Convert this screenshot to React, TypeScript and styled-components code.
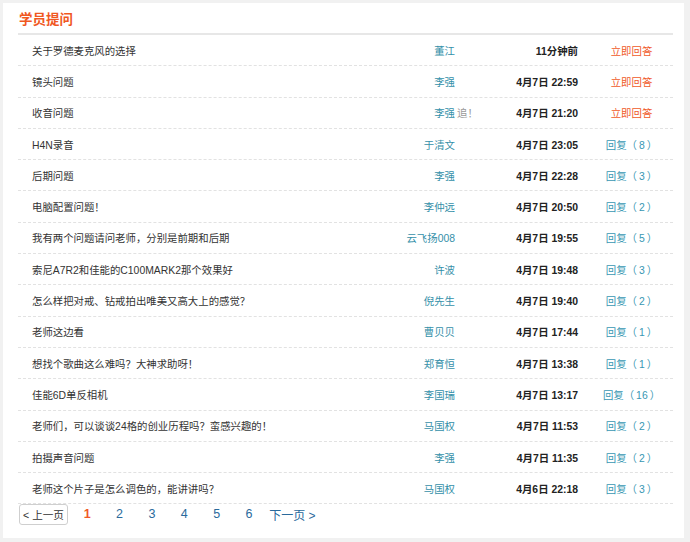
import styled, { createGlobalStyle } from 'styled-components'

const GlobalStyle = createGlobalStyle`
  html, body {
    margin: 0;
    padding: 0;
    background: #f1f1f1;
  }
  body {
    font-family: "Liberation Sans", "Noto Sans CJK SC", sans-serif;
  }
`

const Panel = styled.div`
  margin: 3px 6px 0 3px;
  height: 535px;
  background: #fff;
  padding: 0 11px 0 15px;
  box-sizing: border-box;
`

const Header = styled.div`
  height: 30px;
  display: flex;
  align-items: center;
  border-bottom: 2px solid #e7e7e7;
`

const Title = styled.h2`
  margin: 0;
  font-size: 13.5px;
  font-weight: bold;
  color: #f0581f;
  padding-left: 1px;
`

const List = styled.ul`
  list-style: none;
  margin: 0;
  padding: 0;
`

const Row = styled.li`
  display: grid;
  grid-template-columns: 1fr 80px 123px 95px;
  align-items: center;
  height: 30.3px;
  border-bottom: 1px dashed #e2e2e2;
  font-size: 10.4px;
`

const Question = styled.span`
  padding-left: 14px;
  color: #333;
  white-space: nowrap;
  overflow: hidden;
`

const Name = styled.span`
  display: flex;
  justify-content: flex-end;
  color: #3590a9;
  white-space: nowrap;
`

const Chase = styled.span`
  color: #999;
  margin-left: 2px;
  margin-right: calc(-2em - 2px);
`

const Time = styled.span`
  text-align: right;
  color: #222;
  font-weight: bold;
  white-space: nowrap;
`

const Action = styled.span<{ $urgent?: boolean }>`
  padding-left: 12px;
  text-align: center;
  color: ${(p) => (p.$urgent ? '#f05a28' : '#3897b3')};
  white-space: nowrap;
`

const Count = styled.span`
  padding: 0 2px;
`

const Pager = styled.div`
  display: flex;
  align-items: center;
  margin-top: -1px;
  height: 22px;
  padding-left: 1px;
`

const PrevButton = styled.button`
  height: 21px;
  padding: 0 3px;
  border: 1px solid #cfcfcf;
  border-radius: 3px;
  background: #fff;
  font-family: "Liberation Sans", "Noto Sans CJK SC", sans-serif;
  font-size: 10.6px;
  color: #333;
  margin-right: 3px;
`

const PageNum = styled.a<{ $active?: boolean }>`
  width: 32.4px;
  text-align: center;
  font-size: 12.5px;
  color: ${(p) => (p.$active ? '#f05a28' : '#2a6a9c')};
  font-weight: ${(p) => (p.$active ? 'bold' : 'normal')};
`

const NextLink = styled.a`
  margin-left: 4px;
  font-size: 12px;
  color: #2a6a9c;
`

type Item = {
  q: string
  name: string
  chase?: boolean
  time: string
  replies?: number
}

const items: Item[] = [
  { q: '关于罗德麦克风的选择', name: '董江', time: '11分钟前' },
  { q: '镜头问题', name: '李强', time: '4月7日 22:59' },
  { q: '收音问题', name: '李强', chase: true, time: '4月7日 21:20' },
  { q: 'H4N录音', name: '于清文', time: '4月7日 23:05', replies: 8 },
  { q: '后期问题', name: '李强', time: '4月7日 22:28', replies: 3 },
  { q: '电脑配置问题！', name: '李仲远', time: '4月7日 20:50', replies: 2 },
  { q: '我有两个问题请问老师，分别是前期和后期', name: '云飞扬008', time: '4月7日 19:55', replies: 5 },
  { q: '索尼A7R2和佳能的C100MARK2那个效果好', name: '许波', time: '4月7日 19:48', replies: 3 },
  { q: '怎么样把对戒、钻戒拍出唯美又高大上的感觉？', name: '倪先生', time: '4月7日 19:40', replies: 2 },
  { q: '老师这边看', name: '曹贝贝', time: '4月7日 17:44', replies: 1 },
  { q: '想找个歌曲这么难吗？大神求助呀！', name: '郑育恒', time: '4月7日 13:38', replies: 1 },
  { q: '佳能6D单反相机', name: '李国瑞', time: '4月7日 13:17', replies: 16 },
  { q: '老师们，可以谈谈24格的创业历程吗？蛮感兴趣的！', name: '马国权', time: '4月7日 11:53', replies: 2 },
  { q: '拍摄声音问题', name: '李强', time: '4月7日 11:35', replies: 2 },
  { q: '老师这个片子是怎么调色的，能讲讲吗？', name: '马国权', time: '4月6日 22:18', replies: 3 },
]

export default function App() {
  return (
    <>
      <GlobalStyle />
      <Panel>
        <Header>
          <Title>学员提问</Title>
        </Header>
        <List>
          {items.map((it, i) => (
            <Row key={i}>
              <Question>{it.q}</Question>
              <Name>
                {it.name}
                {it.chase && <Chase>追！</Chase>}
              </Name>
              <Time>{it.time}</Time>
              {it.replies === undefined ? (
                <Action $urgent>立即回答</Action>
              ) : (
                <Action>
                  回复（<Count>{it.replies}</Count>）
                </Action>
              )}
            </Row>
          ))}
        </List>
        <Pager>
          <PrevButton>&lt; 上一页</PrevButton>
          {[1, 2, 3, 4, 5, 6].map((n) => (
            <PageNum key={n} $active={n === 1}>
              {n}
            </PageNum>
          ))}
          <NextLink>下一页 &gt;</NextLink>
        </Pager>
      </Panel>
    </>
  )
}
